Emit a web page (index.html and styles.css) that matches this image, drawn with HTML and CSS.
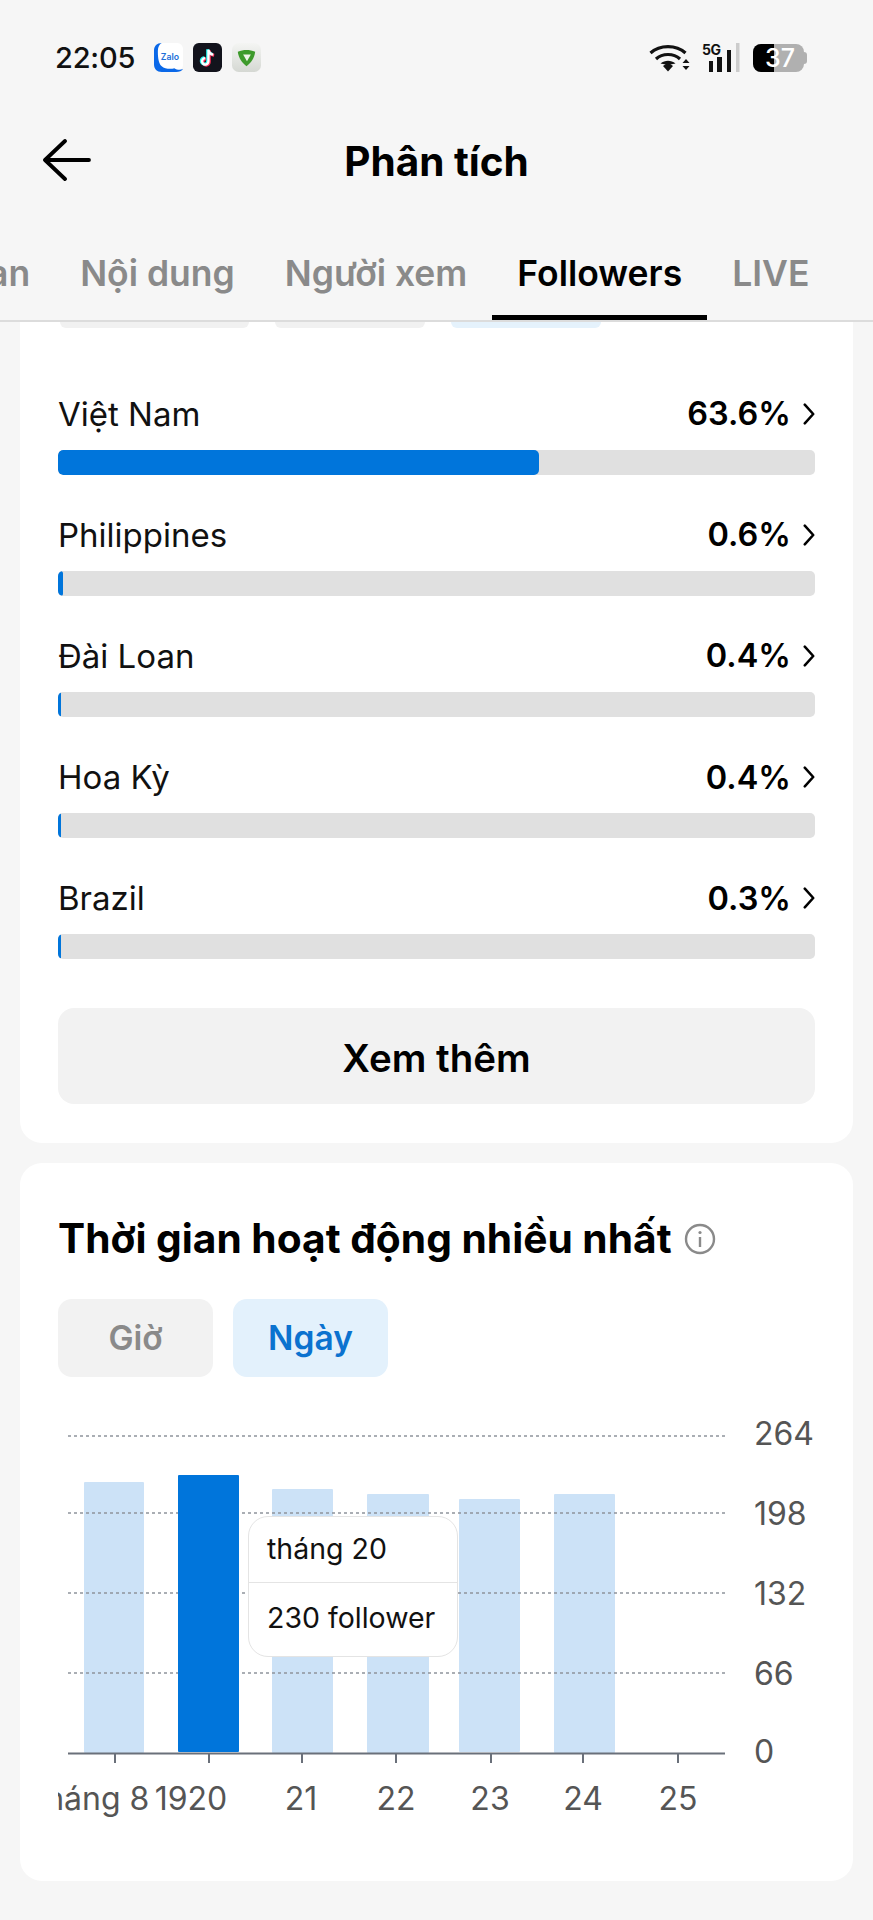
FILE: index.html
```html
<!DOCTYPE html>
<html lang="vi">
<head>
<meta charset="utf-8">
<title>Phân tích</title>
<link rel="stylesheet" href="styles.css">
</head>
<body>
<div class="page">
  <header class="status">
    <div class="status-left">
      <span class="time">22:05</span>
      <svg class="app" viewBox="0 0 30 30"><rect x="2" width="28" height="29" rx="6" fill="#fff"/><path d="M8 0C3 0 0 3 0 8v14c0 5 3 8 8 8h15c3 0 6-1 7-3-3 1-6 1-9-1-3 1-10 1-13-2C4 21 4 12 4 8c0-4 2-7 4-8z" fill="#0a68e8"/><text x="16.500" y="17.500" class="zalo">Zalo</text></svg>
      <svg class="app" viewBox="0 0 30 30"><rect width="30" height="30" rx="6" fill="#12131c"/><path d="M16 7v12a3.300 3.300 0 1 1-3.300-3.300M16 7c.4 3 2.300 4.700 5 5" fill="none" stroke="#ff2c55" stroke-width="3" transform="translate(.9 .7)"/><path d="M16 7v12a3.300 3.300 0 1 1-3.300-3.300M16 7c.4 3 2.300 4.700 5 5" fill="none" stroke="#25f4ee" stroke-width="3" transform="translate(-.9 -.5)"/><path d="M16 7v12a3.300 3.300 0 1 1-3.300-3.300M16 7c.4 3 2.300 4.700 5 5" fill="none" stroke="#fff" stroke-width="2.400"/></svg>
      <svg class="app" viewBox="0 0 30 30"><defs><linearGradient id="shieldbg" x1="0" y1="0" x2="0" y2="1"><stop offset="0" stop-color="#f4f5f3"/><stop offset="1" stop-color="#d5d8d3"/></linearGradient></defs><rect width="30" height="30" rx="7" fill="url(#shieldbg)"/><path d="M6 9c6-2.500 12-2.500 18 0-1 7-4 11-9 15C10 20 7 16 6 9z" fill="#3d9a2b"/><path d="M11.500 12h8L15.500 19z" fill="#eef3e8"/></svg>
    </div>
    <div class="status-right">
      <svg class="wifi" viewBox="0 0 42 30"><g fill="none" stroke="#111" stroke-width="3.200"><path d="M1.500 11C11 2.500 27 2.500 36.500 11"/><path d="M7 17c6.500-6 17.500-6 24 0"/></g><path d="M11.500 21.500c4.500-3.800 10.500-3.800 15 0L19 23z" fill="#111"/><path d="M14 24l5-3.500 5 3.500-5 5.500z" fill="#111"/><path d="M33.500 21l3.500-4 3.500 4zM33.500 24l3.500 4 3.500-4z" fill="#111"/></svg>
      <div class="signal">
        <span class="five-g">5G</span>
        <svg class="bars" viewBox="0 0 31 30"><rect y="18" width="4" height="11" fill="#111"/><rect x="8" y="14" width="5" height="15" fill="#111"/><rect x="18" y="7" width="4" height="22" fill="#111"/><rect x="27" width="3.500" height="29" fill="#ccc"/></svg>
      </div>
      <div class="battery">
        <div class="battery-body">
          <span class="battery-fill"></span>
          <span class="battery-num">37</span>
        </div>
        <span class="battery-cap"></span>
      </div>
    </div>
  </header>

  <nav class="nav">
    <svg class="back" viewBox="0 0 50 42"><path d="M47 21H3M23 2 3 21l20 19" fill="none" stroke="#000" stroke-width="3.800" stroke-linecap="round" stroke-linejoin="round"/></svg>
    <h1 class="title">Phân tích</h1>
  </nav>

  <div class="tabs">
    <span class="tab">Tổng quan</span>
    <span class="tab">Nội dung</span>
    <span class="tab">Người xem</span>
    <span class="tab tab-active">Followers</span>
    <span class="tab">LIVE</span>
  </div>

  <main class="content">
    <section class="card card-regions">
      <div class="peek">
        <span class="peek-chip peek-a"></span>
        <span class="peek-chip peek-b"></span>
        <span class="peek-chip peek-c"></span>
      </div>
      <div class="rows">
        <div class="row">
          <div class="row-head"><span class="name">Việt Nam</span><span class="value">63.6%<svg class="chev" viewBox="0 0 14 26"><path d="M2 2l10 11L2 24" /></svg></span></div>
          <div class="track"><div class="fill" style="width:63.6%"></div></div>
        </div>
        <div class="row">
          <div class="row-head"><span class="name">Philippines</span><span class="value">0.6%<svg class="chev" viewBox="0 0 14 26"><path d="M2 2l10 11L2 24" /></svg></span></div>
          <div class="track"><div class="fill" style="width:0.6%"></div></div>
        </div>
        <div class="row">
          <div class="row-head"><span class="name">Đài Loan</span><span class="value">0.4%<svg class="chev" viewBox="0 0 14 26"><path d="M2 2l10 11L2 24" /></svg></span></div>
          <div class="track"><div class="fill" style="width:0.4%"></div></div>
        </div>
        <div class="row">
          <div class="row-head"><span class="name">Hoa Kỳ</span><span class="value">0.4%<svg class="chev" viewBox="0 0 14 26"><path d="M2 2l10 11L2 24" /></svg></span></div>
          <div class="track"><div class="fill" style="width:0.4%"></div></div>
        </div>
        <div class="row">
          <div class="row-head"><span class="name">Brazil</span><span class="value">0.3%<svg class="chev" viewBox="0 0 14 26"><path d="M2 2l10 11L2 24" /></svg></span></div>
          <div class="track"><div class="fill" style="width:0.3%"></div></div>
        </div>
      </div>
      <button class="more">Xem thêm</button>
    </section>

    <section class="card card-active">
      <div class="heading">
        <h2 class="heading-text">Thời gian hoạt động nhiều nhất</h2>
        <svg class="info" viewBox="0 0 32 32"><circle cx="16" cy="16" r="14" fill="none" stroke="#8a8a8a" stroke-width="2.400"/><rect x="14.800" y="14" width="2.400" height="10" fill="#8a8a8a"/><circle cx="16" cy="9.500" r="1.600" fill="#8a8a8a"/></svg>
      </div>
      <div class="toggle">
        <span class="pill pill-off">Giờ</span>
        <span class="pill pill-on">Ngày</span>
      </div>
      <div class="chart">
        <svg class="plot" viewBox="0 -12 757 432">
          <g fill="#cce2f7">
            <rect x="26" y="62" width="60" height="271" rx="1"/>
            <rect x="214" y="69" width="61" height="264" rx="1"/>
            <rect x="309" y="74" width="62" height="259" rx="1"/>
            <rect x="401" y="79" width="61" height="253" rx="1"/>
            <rect x="496" y="74" width="61" height="259" rx="1"/>
          </g>
          <g class="grid">
            <line x1="10" x2="667" y1="16" y2="16"/>
            <line x1="10" x2="667" y1="93" y2="93"/>
            <line x1="10" x2="667" y1="173" y2="173"/>
            <line x1="10" x2="667" y1="253" y2="253"/>
          </g>
          <rect x="120" y="55" width="61" height="277" rx="1" fill="#0075db"/>
          <g class="axis">
            <line x1="10" x2="667" y1="333.500" y2="333.500"/>
            <line x1="57" x2="57" y1="333" y2="343"/>
            <line x1="151" x2="151" y1="333" y2="343"/>
            <line x1="244" x2="244" y1="333" y2="343"/>
            <line x1="338" x2="338" y1="333" y2="343"/>
            <line x1="433" x2="433" y1="333" y2="343"/>
            <line x1="525" x2="525" y1="333" y2="343"/>
            <line x1="620" x2="620" y1="333" y2="343"/>
          </g>
          <g class="y-labels">
            <text x="696" y="24.500">264</text>
            <text x="696" y="105">198</text>
            <text x="696" y="184.500">132</text>
            <text x="696" y="264.500">66</text>
            <text x="696" y="342.500">0</text>
          </g>
          <g class="x-labels">
            <text x="34" y="390">tháng 8</text>
            <text x="133" y="390">1920</text>
            <text x="243" y="390">21</text>
            <text x="338" y="390">22</text>
            <text x="432" y="390">23</text>
            <text x="525" y="390">24</text>
            <text x="620" y="390">25</text>
          </g>
        </svg>
        <div class="tooltip">
          <div class="tip-line">tháng 20</div>
          <div class="tip-line tip-line-last">230 follower</div>
        </div>
      </div>
    </section>
  </main>
</div>
</body>
</html>
```

FILE: styles.css
```css
* { box-sizing: border-box; }
html, body { margin: 0; padding: 0; }
body {
  background: #f6f6f6;
  color: #000;
  font-family: Inter, "Noto Sans", "Liberation Sans", sans-serif;
}
.page { width: 873px; height: 1920px; overflow: hidden; }

.status {
  height: 115px;
  padding: 43px 66px 0 55px;
  display: flex;
  justify-content: space-between;
  align-items: flex-start;
}
.status-left { display: flex; align-items: center; gap: 10px; height: 29px; }
.time { font-size: 29px; font-weight: 500; letter-spacing: -0.2px; color: #111; margin-right: 9px; }
.app { width: 29px; height: 29px; display: block; }
.zalo { font-size: 9px; font-weight: 600; fill: #1c6fd8; text-anchor: middle; }
.status-right { display: flex; align-items: flex-start; gap: 11px; }
.wifi { width: 42px; height: 30px; display: block; margin-top: -1px; }
.signal { position: relative; width: 39px; height: 30px; }
.five-g { position: absolute; left: 0; top: -2px; font-size: 14px; font-weight: 700; letter-spacing: -0.5px; color: #111; }
.bars { position: absolute; left: 7px; top: 0; width: 31px; height: 30px; display: block; }
.battery {
  display: flex;
  align-items: center;
  width: 54px;
  height: 28px;
  margin: 1px 0 0 1px;
}
.battery-body {
  position: relative;
  width: 51px;
  height: 28px;
  background: #b0b0b0;
  border-radius: 8px;
  overflow: hidden;
}
.battery-cap { width: 3px; height: 12px; background: #b0b0b0; border-radius: 0 3px 3px 0; }
.battery-fill { position: absolute; left: 0; top: 0; bottom: 0; width: 21px; background: #000; }
.battery-num {
  position: absolute;
  left: 12px;
  top: 0;
  line-height: 28px;
  font-size: 25px;
  font-weight: 500;
  color: #fff;
}

.nav {
  height: 95px;
  position: relative;
  display: flex;
  justify-content: center;
  align-items: center;
}
.back { position: absolute; left: 42px; top: 24px; width: 50px; height: 42px; }
.title { margin: 0; font-size: 40.500px; font-weight: 700; line-height: 95px; transform: translateY(-1px); }

.tabs {
  height: 112px;
  border-bottom: 2px solid #dcdcdc;
  display: flex;
  align-items: flex-start;
  margin-left: -176px;
  width: 1049px;
  padding-top: 30px;
}
.tab {
  font-size: 35.500px;
  font-weight: 600;
  color: #8a8a8a;
  line-height: 67px;
  height: 80px;
  padding: 0 25px;
  white-space: nowrap;
}
.tab-active { color: #000; border-bottom: 5px solid #000; height: 80px; }

.content { display: flex; flex-direction: column; gap: 20px; padding: 0 20px; }
.card { background: #fff; }
.card-regions { border-radius: 0 0 22px 22px; padding: 0 38px 39px; }
.card-active { border-radius: 22px; padding: 51px 0 41px 38px; }

.peek { display: flex; height: 6px; padding-left: 2px; gap: 26px; }
.peek-chip { display: block; height: 6px; border-radius: 0 0 10px 10px; }
.peek-a { width: 189px; background: #f1f1f1; }
.peek-b { width: 150px; background: #f1f1f1; }
.peek-c { width: 150px; background: #e5f2fc; }

.rows { margin-top: 65.500px; display: flex; flex-direction: column; gap: 40.200px; }
.row-head { height: 40px; display: flex; justify-content: space-between; align-items: center; margin-bottom: 16px; }
.name { font-size: 33px; color: #111; }
.value { font-size: 32.500px; font-weight: 600; display: flex; align-items: center; gap: 12px; }
.chev { width: 12px; height: 22px; display: block; }
.chev path { fill: none; stroke: #000; stroke-width: 3; stroke-linecap: round; stroke-linejoin: round; }
.track { height: 25px; background: #e0e0e0; border-radius: 5px; overflow: hidden; }
.fill { height: 100%; min-width: 3px; background: #0075db; border-radius: 5px; }

.more {
  display: block;
  width: 100%;
  height: 96px;
  margin-top: 48.700px;
  padding: 4px 0 0;
  border: 0;
  border-radius: 16px;
  background: #f2f2f2;
  font-family: inherit;
  font-size: 38.500px;
  font-weight: 600;
  color: #000;
}

.heading { display: flex; align-items: center; gap: 12px; height: 50px; }
.heading-text { margin: 0; font-size: 40.700px; font-weight: 700; color: #000; white-space: nowrap; }
.info { width: 32px; height: 32px; display: block; }

.toggle { display: flex; gap: 20px; margin-top: 35px; }
.pill {
  width: 155px;
  height: 78px;
  border-radius: 14px;
  font-size: 33.500px;
  font-weight: 600;
  display: flex;
  align-items: center;
  justify-content: center;
}
.pill-off { background: #f2f2f2; color: #8a8a8a; }
.pill-on { background: #e3f1fc; color: #0b72cf; }

.chart { position: relative; width: 757px; height: 432px; margin-top: 31px; }
.plot { display: block; width: 757px; height: 432px; overflow: hidden; font-family: Inter, "Noto Sans", sans-serif; }
.grid line { stroke: #8f949c; stroke-width: 1.500; stroke-dasharray: 3 3; }
.axis line { stroke: #6a707a; stroke-width: 2; }
.y-labels text { font-size: 32px; fill: #555; }
.x-labels text { font-size: 32px; fill: #555; text-anchor: middle; }

.tooltip {
  position: absolute;
  left: 190px;
  top: 108px;
  width: 210px;
  height: 141px;
  background: #fff;
  border: 1.500px solid #e4e4e4;
  border-radius: 20px;
}
.tip-line {
  height: 66px;
  padding: 0 0 2px 18px;
  font-size: 28.500px;
  color: #111;
  display: flex;
  align-items: center;
  border-bottom: 1.500px solid #e4e4e4;
}
.tip-line-last { border-bottom: 0; height: 71px; }
```
